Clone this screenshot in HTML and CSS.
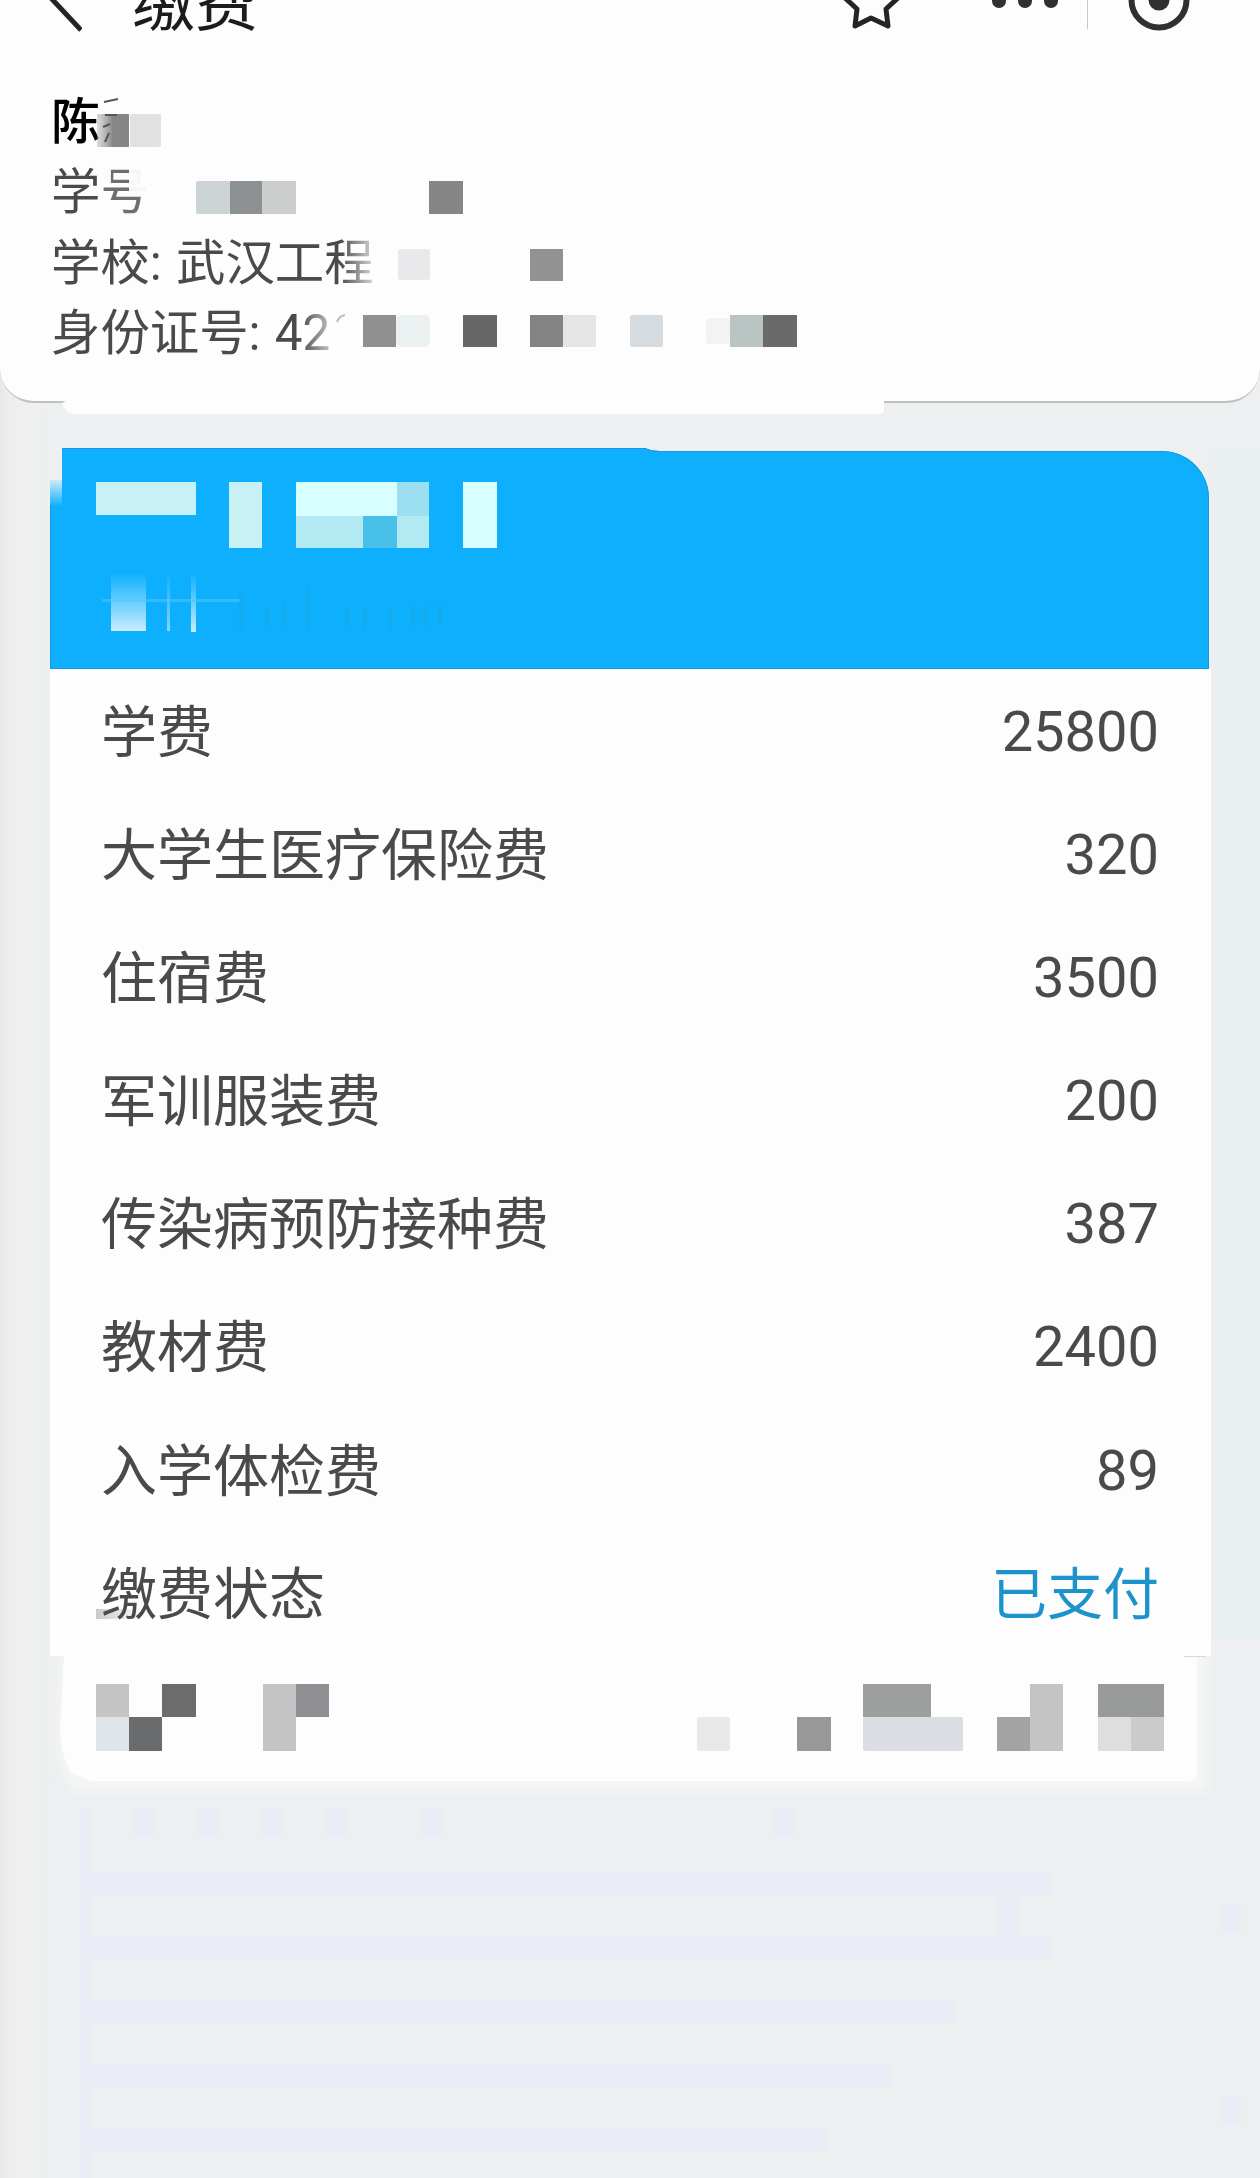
FILE: index.html
```html
<!DOCTYPE html>
<html lang="zh-CN">
<head>
<meta charset="utf-8">
<title>缴费</title>
<link rel="stylesheet" href="styles.css">
</head>
<body>
<main class="page">
  <section class="profile">
    <header class="navbar">
      <svg class="back" width="40" height="40" viewBox="0 0 40 40"><path d="M8-3 39 30" /></svg>
      <h1 class="title">缴费</h1>
      <svg class="actions" width="360" height="40" viewBox="0 0 360 40">
        <path class="line" d="M4-3 17 9 15 26 31 18 48 26 46 9 59-3" />
        <g class="solid"><circle cx="159" cy="1" r="7" /><circle cx="185" cy="1" r="7" /><circle cx="211" cy="1" r="7" /><circle cx="319" cy="0" r="10.5" /></g>
        <path class="divider" d="M247.500 0V29" />
        <circle class="ring" cx="319" cy="0" r="27.500" />
      </svg>
    </header>
    <div class="student">
      <p class="name">陈</p>
      <p>学号</p>
      <p>学校: 武汉工程</p>
      <p>身份证号: 42</p>
    </div>
    <svg class="mask" width="1260" height="420" viewBox="0 0 1260 420">
      <defs>
        <linearGradient id="fade"><stop offset="0" stop-color="#fdfdfd" stop-opacity="0" /><stop offset="1" stop-color="#fdfdfd" /></linearGradient>
        <linearGradient id="grey"><stop offset="0" stop-color="#b8b8b8" stop-opacity=".5" /><stop offset=".5" stop-color="#868686" /></linearGradient>
      </defs>
      <rect x="97" y="114" width="32" height="33" fill="url(#grey)" />
      <rect x="130" y="114" width="31" height="33" rx="2" fill="#e1e1e1" />
      <path d="M104 102 118 99M105 115H117M103 127 110 124M109 133 105 142" stroke="#555" stroke-width="2" fill="none" />
      <rect x="103" y="165" width="8" height="18" fill="#fdfdfd" opacity=".9" />
      <rect x="129" y="165" width="24" height="31" fill="#fdfdfd" opacity=".95" />
      <rect x="102" y="165" width="48" height="50" fill="#fdfdfd" opacity=".2" />
      <rect x="196" y="181" width="34" height="33" rx="2" fill="#cdd4d6" />
      <rect x="230" y="181" width="32" height="33" fill="#8d9194" />
      <rect x="262" y="181" width="34" height="33" fill="#cbcecd" />
      <rect x="429" y="181" width="34" height="33" fill="#868686" />
      <rect x="340" y="235" width="43" height="53" fill="url(#fade)" />
      <rect x="398" y="249" width="32" height="31" rx="3" fill="#e9e9eb" />
      <rect x="530" y="249" width="33" height="32" fill="#929292" />
      <rect x="300" y="308" width="46" height="44" fill="url(#fade)" />
      <path d="M337 322q2-6 8-7" stroke="#bbb" stroke-width="2" fill="none" />
      <rect x="363" y="315" width="33" height="32" fill="#909090" />
      <rect x="396" y="315" width="34" height="32" rx="5" fill="#ebf1f0" />
      <rect x="463" y="315" width="34" height="32" fill="#666" />
      <rect x="530" y="315" width="33" height="32" fill="#838383" />
      <rect x="563" y="315" width="33" height="32" rx="2" fill="#e5e5e5" />
      <rect x="630" y="315" width="33" height="32" rx="2" fill="#d6dbdf" />
      <rect x="706" y="318" width="24" height="26" rx="4" fill="#f4f3f4" />
      <rect x="730" y="315" width="33" height="32" fill="#bac4c2" />
      <rect x="763" y="315" width="34" height="32" fill="#6a6a6a" />
      <path d="M66 401H884V410Q884 414 878 414H72Q66 414 62 403Z" fill="#fdfdfd" />
    </svg>
  </section>

  <section class="card">
    <svg class="banner" width="1160" height="222" viewBox="0 0 1160 222">
      <defs>
        <linearGradient id="rise" x2="0" y2="1"><stop offset="0" stop-color="#bfeaff" stop-opacity="0" /><stop offset="1" stop-color="#c8edff" /></linearGradient>
        <linearGradient id="edge" x2="0" y2="1"><stop offset="0" stop-color="#cdeaf5" /><stop offset="1" stop-color="#10b0ff" /></linearGradient>
      </defs>
      <path d="M0 35H12V0H595Q601 3 610 3H1112A47 47 0 0 1 1159 50V221H0Z" fill="#0eb0fe" />
      <path d="M12 .5H595Q601 3.500 610 3.500H1112A46.500 46.500 0 0 1 1158.500 50V220.500H.5V45" fill="none" stroke="#1a97dc" />
      <rect x="0" y="32" width="12" height="26" fill="url(#edge)" />
      <g fill="#c8f1f5">
        <rect x="46" y="34" width="100" height="33" />
        <rect x="179" y="34" width="33" height="66" />
        <rect x="246" y="34" width="133" height="66" fill="#b3e9f2" />
        <rect x="246" y="34" width="101" height="34" fill="#d8ffff" />
        <rect x="347" y="34" width="32" height="34" fill="#9bdff0" />
        <rect x="313" y="68" width="34" height="32" fill="#49c0ea" />
        <rect x="413" y="34" width="34" height="66" fill="#d8ffff" />
      </g>
      <rect x="61" y="125" width="35" height="58" fill="url(#rise)" />
      <rect x="117" y="125" width="3" height="58" fill="url(#rise)" opacity=".65" />
      <rect x="141" y="125" width="5" height="59" fill="url(#rise)" />
      <path d="M52 152.500H190" stroke="#57c8fa" stroke-width="3" opacity=".5" />
      <path d="M191 145v38M217 160v20M234 155v22M258 140v42M297 160v20M315 160v22M340 160v22M363 158v20M375 158v20M390 157v18" stroke="#1ba6da" stroke-width="4" opacity=".45" />
    </svg>
    <dl class="fees">
      <div class="fee"><dt>学费</dt><dd>25800</dd></div>
      <div class="fee"><dt>大学生医疗保险费</dt><dd>320</dd></div>
      <div class="fee"><dt>住宿费</dt><dd>3500</dd></div>
      <div class="fee"><dt>军训服装费</dt><dd>200</dd></div>
      <div class="fee"><dt>传染病预防接种费</dt><dd>387</dd></div>
      <div class="fee"><dt>教材费</dt><dd>2400</dd></div>
      <div class="fee"><dt>入学体检费</dt><dd>89</dd></div>
      <div class="fee"><dt class="smudge">缴费状态</dt><dd class="paid">已支付</dd></div>
    </dl>
  </section>

  <svg class="time" width="1260" height="522" viewBox="0 1656 1260 522">
    <defs><filter id="soft" x="-5%" y="-20%" width="110%" height="140%"><feGaussianBlur stdDeviation="4" /></filter></defs>
    <path d="M60 1640H1207V1792H75Q60 1780 58 1740Z" fill="#f4f6f6" filter="url(#soft)" />
    <path d="M50 1656H1197V1774Q1195 1781 1188 1781H92L72 1773Q62 1758 60 1735L64 1656Z" fill="#fdfdfd" />
    <path d="M1184 1656.500H1206" stroke="#d5d8d8" />
    <g fill="#c4c4c4">
      <rect x="96" y="1684" width="33" height="33" />
      <rect x="96" y="1717" width="33" height="34" fill="#dfe4e9" />
      <rect x="129" y="1717" width="33" height="34" fill="#6a6b6c" />
      <rect x="162" y="1684" width="34" height="33" fill="#6c6c6c" />
      <rect x="263" y="1684" width="33" height="67" />
      <rect x="296" y="1684" width="33" height="33" fill="#8f8f93" />
      <rect x="697" y="1717" width="33" height="34" rx="3" fill="#e8e8e9" />
      <rect x="797" y="1717" width="34" height="34" fill="#989898" />
      <rect x="863" y="1684" width="68" height="33" fill="#9d9e9e" />
      <rect x="863" y="1717" width="100" height="34" rx="2" fill="#dadde1" />
      <rect x="997" y="1717" width="33" height="34" fill="#a3a3a3" />
      <rect x="1030" y="1684" width="33" height="67" />
      <rect x="1098" y="1684" width="66" height="33" fill="#989b9a" />
      <rect x="1098" y="1717" width="33" height="34" fill="#dedede" />
      <rect x="1131" y="1717" width="33" height="34" fill="#cbcbcb" />
    </g>
    <g fill="#ebecf5">
      <rect x="80" y="1808" width="11" height="370" />
      <rect x="133" y="1808" width="22" height="28" /><rect x="197" y="1808" width="22" height="28" />
      <rect x="261" y="1808" width="22" height="28" /><rect x="325" y="1808" width="22" height="28" />
      <rect x="421" y="1808" width="22" height="28" /><rect x="773" y="1808" width="22" height="28" />
      <rect x="91" y="1872" width="959" height="24" /><rect x="91" y="1936" width="959" height="24" />
      <rect x="998" y="1896" width="22" height="40" />
      <rect x="91" y="2000" width="864" height="24" /><rect x="91" y="2064" width="800" height="24" />
      <rect x="91" y="2128" width="738" height="24" />
      <rect x="1221" y="1904" width="20" height="28" /><rect x="1221" y="2096" width="20" height="28" />
    </g>
  </svg>
</main>
</body>
</html>
```
FILE: styles.css
```css
* { box-sizing: border-box; }

body {
  margin: 0;
  background: #edeff0;
  color: #4a4a4a;
  font-family: Roboto, "Noto Sans CJK SC", sans-serif;
}

.page {
  display: flex;
  flex-direction: column;
  width: 1260px;
  height: 2178px;
  overflow: hidden;
  background:
    linear-gradient(90deg, #e9e9e9 0, #efefef 10px, #efefef 26px, rgba(237, 240, 239, 0) 50px),
    linear-gradient(90deg, transparent 1209px, #e9f1f0 1225px) 0 450px / 100% 1190px no-repeat,
    #edeff0;
}

.profile {
  position: relative;
  flex: none;
  height: 403px;
  background: #fdfdfd;
  border-bottom: 2px solid #bfc1c1;
  border-radius: 0 0 34px 34px;
}

.navbar {
  display: flex;
  height: 87px;
  padding-left: 42px;
  overflow: hidden;
}

.back, .actions { flex: none; fill: none; stroke: #242424; stroke-width: 5; }
.title {
  width: 710px;
  margin: -36px 0 0 50px;
  color: #1c1c1c;
  font-size: 63px;
  font-weight: 400;
  line-height: 80px;
}
.actions { margin-left: -2px; stroke-linejoin: round; }
.solid { fill: #303030; stroke: none; }
.ring { stroke: #303030; stroke-width: 6; }
.divider { stroke: #c8c8c8; stroke-width: 1; }

.student {
  padding-left: 51px;
  font-size: 49.400px;
  line-height: 70.300px;
  word-spacing: 2px;
}
.student p { margin: 0; }
.student .name { color: #000; font-weight: 500; }

.mask { position: absolute; left: 0; top: 0; }

.card {
  flex: none;
  width: 1161px;
  height: 1208px;
  margin: 45px 0 0 50px;
  background: linear-gradient(#fdfdfd, #fdfdfd) 0 221px / 100% 100% no-repeat;
}
.banner { display: block; }

.fees { margin: 0; padding: 0 52px 0 51px; }
.fee {
  display: flex;
  justify-content: space-between;
  height: 123.100px;
  font-size: 56px;
  line-height: 124px;
}
.fee dt { padding-top: 1px; }
.fee dd { margin: 0; }
.fee .paid { padding-top: 1px; color: #1c93cb; }
.smudge {
  margin-left: -5px;
  padding-left: 5px;
  background: linear-gradient(90deg, #c9c9c9, #fdfdfd) 0 77px / 46px 10px no-repeat;
}

.time { display: block; flex: none; }
```
